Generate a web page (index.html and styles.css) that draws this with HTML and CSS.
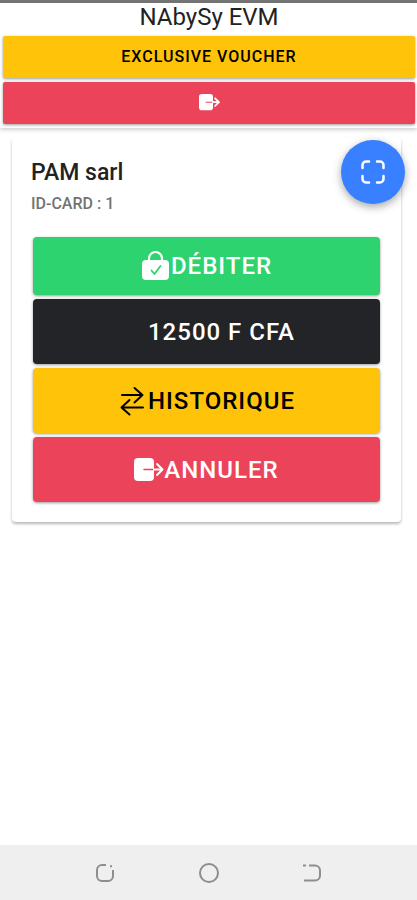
FILE: index.html
```html
<!DOCTYPE html>
<html lang="fr">
<head>
<meta charset="utf-8">
<meta name="viewport" content="width=device-width, initial-scale=1">
<title>NAbySy EVM</title>
<link rel="stylesheet" href="styles.css">
</head>
<body>
<header class="header">
  <h1 class="title">NAbySy EVM</h1>
  <button class="button warning" type="button">EXCLUSIVE VOUCHER</button>
  <button class="button danger" type="button" aria-label="Quitter">
    <svg class="icon-small" viewBox="0 0 30 30" aria-hidden="true">
      <rect x="0" y="3" width="20" height="23" rx="4" fill="currentColor"/>
      <path d="M10 14.500H20" stroke="#eb445a" stroke-width="1.500" stroke-linecap="round"/>
      <path d="M20 14.500H28.500M23 9l5.500 5.500-5.500 5.500" fill="none" stroke="currentColor" stroke-width="2.500" stroke-linecap="round" stroke-linejoin="round"/>
    </svg>
  </button>
</header>
<main class="content">
  <section class="card">
    <h2 class="name">PAM sarl</h2>
    <p class="card-id">ID-CARD : 1</p>
    <div class="actions">
      <button class="button large success" type="button">
        <svg class="icon" viewBox="0 0 30 30" aria-hidden="true">
          <rect x="1" y="9" width="27" height="20" rx="4" fill="currentColor"/>
          <path d="M8 10V7.500a6.500 6.500 0 0 1 13 0V10" fill="none" stroke="currentColor" stroke-width="2.200"/>
          <path d="M10.500 19.500l3 3.500 6-8" fill="none" stroke="#2dd36f" stroke-width="1.800" stroke-linecap="round" stroke-linejoin="round"/>
        </svg><span>DÉBITER</span>
      </button>
      <button class="button large dark" type="button">
        <span class="icon"></span><span>12500 F CFA</span>
      </button>
      <button class="button large warning" type="button">
        <svg class="icon" viewBox="0 0 30 30" aria-hidden="true">
          <path d="M4 9H24M16.500 2l8 7-8 7.500M25 21.500H4M11.500 14L3.500 21.500l8 7" fill="none" stroke="currentColor" stroke-width="2" stroke-linecap="round" stroke-linejoin="round"/>
        </svg><span>HISTORIQUE</span>
      </button>
      <button class="button large danger" type="button">
        <svg class="icon" viewBox="0 0 30 30" aria-hidden="true">
          <rect x="0" y="3" width="20" height="23" rx="4" fill="currentColor"/>
          <path d="M10 14.500H20" stroke="#eb445a" stroke-width="1.500" stroke-linecap="round"/>
          <path d="M20 14.500H28.500M23 9l5.500 5.500-5.500 5.500" fill="none" stroke="currentColor" stroke-width="2" stroke-linecap="round" stroke-linejoin="round"/>
        </svg><span>ANNULER</span>
      </button>
    </div>
  </section>
  <button class="fab" type="button" aria-label="Scanner">
    <svg class="scan" viewBox="0 0 24 24" aria-hidden="true">
      <path d="M1.500 8V5a3.500 3.500 0 0 1 3.500-3.500H8M16 1.500h3A3.500 3.500 0 0 1 22.500 5V8M22.500 16v3a3.500 3.500 0 0 1-3.500 3.500H16M8 22.500H5A3.500 3.500 0 0 1 1.500 19V16" fill="none" stroke="currentColor" stroke-width="2.500" stroke-linecap="round"/>
    </svg>
  </button>
</main>
<nav class="navbar" aria-label="Navigation">
  <svg class="nav-icon" viewBox="0 0 20 20" aria-hidden="true">
    <path d="M11 2H7a5 5 0 0 0-5 5v6a5 5 0 0 0 5 5h6a5 5 0 0 0 5-5V7M15 3.200h2"/>
  </svg>
  <svg class="nav-icon" viewBox="0 0 20 20" aria-hidden="true">
    <circle cx="10" cy="10" r="9"/>
  </svg>
  <svg class="nav-icon" viewBox="0 0 20 20" aria-hidden="true">
    <path d="M1 2.500H4M7 2.500h6a5 5 0 0 1 5 5v5a5 5 0 0 1-5 5H2"/>
  </svg>
</nav>
</body>
</html>
```
FILE: styles.css
```css
* {
  box-sizing: border-box;
}

body {
  display: flex;
  flex-direction: column;
  min-height: 100vh;
  margin: 0;
  border-top: 3px solid #737373;
  background: #fff;
  color: #222;
  font-family: Roboto, "Liberation Sans", sans-serif;
}

.header {
  display: flex;
  flex-direction: column;
  gap: 4px;
  padding: 0 2px 4px 3px;
  box-shadow: 0 2px 4px rgba(0, 0, 0, 0.18);
}

.title {
  margin: 0;
  font-size: 24px;
  font-weight: 400;
  line-height: 29px;
  text-align: center;
}

.button {
  display: flex;
  align-items: center;
  justify-content: center;
  height: 42px;
  padding: 0 0 2px;
  border: 0;
  border-radius: 2px;
  box-shadow: 0 1px 3px rgba(0, 0, 0, 0.4);
  font-family: inherit;
  font-size: 16px;
  font-weight: 500;
  letter-spacing: 1px;
}

.large {
  height: 65px;
  padding: 0;
  border-radius: 4px;
  font-size: 24px;
}

.success {
  height: 58px;
  background: #2dd36f;
  color: #fff;
}

.dark {
  background: #222428;
  color: #fff;
}

.warning {
  background: #ffc409;
  color: #000;
}

.danger {
  background: #eb445a;
  color: #fff;
}

.icon {
  width: 30px;
  height: 30px;
}

.icon-small {
  width: 21px;
  height: 21px;
}

.content {
  position: relative;
  flex: 1;
  padding: 10px 16px 24px 12px;
}

.card {
  padding: 20px 21px;
  border-radius: 4px;
  box-shadow: 0 2px 3px rgba(0, 0, 0, 0.28);
}

.name {
  margin: 0;
  font-size: 23px;
  font-weight: 500;
  line-height: 30px;
}

.card-id {
  margin: 6px 0 23px;
  color: #737373;
  font-size: 16px;
  font-weight: 500;
  line-height: 20px;
}

.name,
.card-id {
  margin-left: -2px;
}

.actions {
  display: flex;
  flex-direction: column;
  gap: 4px;
}

.fab {
  position: absolute;
  top: 12px;
  right: 12px;
  display: flex;
  align-items: center;
  justify-content: center;
  width: 64px;
  height: 64px;
  padding: 0;
  border: 0;
  border-radius: 50%;
  background: #3880ff;
  box-shadow: 0 3px 8px rgba(0, 0, 0, 0.35);
  color: #fff;
}

.scan {
  width: 24px;
  height: 24px;
}

.navbar {
  display: flex;
  align-items: center;
  justify-content: space-evenly;
  height: 55px;
  padding: 0 12px;
  background: #efefef;
}

.nav-icon {
  width: 20px;
  height: 20px;
  fill: none;
  stroke: #8e8e8e;
  stroke-width: 2;
}
```
